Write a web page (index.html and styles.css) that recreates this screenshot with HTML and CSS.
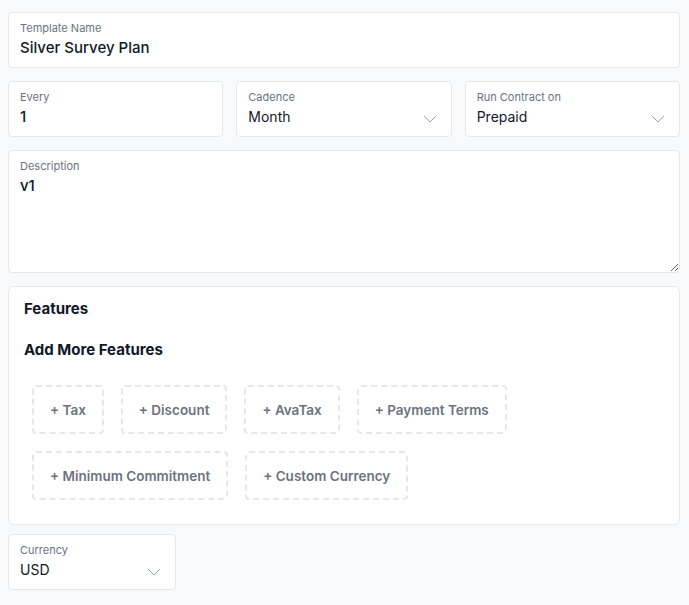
FILE: index.html
```
<!DOCTYPE html>
<html lang="en">
<head>
    <meta charset="UTF-8">
    <meta name="viewport" content="width=device-width, initial-scale=1.0">
    <title>Plan Template</title>
    <link rel="stylesheet" href="styles.css">
</head>
<body>
    <div class="page">
        <div class="field">
            <span class="label">Template Name</span>
            <span class="value input">Silver Survey Plan</span>
        </div>

        <div class="row">
            <div class="field">
                <span class="label">Every</span>
                <span class="value input">1</span>
            </div>
            <div class="field select">
                <span class="label">Cadence</span>
                <span class="value">Month</span>
                <svg class="chevron" width="14" height="8" viewBox="0 0 14 8"><path d="M1 1 L7 7 L13 1" fill="none" stroke="#9ca3af" stroke-width="1"/></svg>
            </div>
            <div class="field select">
                <span class="label">Run Contract on</span>
                <span class="value">Prepaid</span>
                <svg class="chevron" width="14" height="8" viewBox="0 0 14 8"><path d="M1 1 L7 7 L13 1" fill="none" stroke="#9ca3af" stroke-width="1"/></svg>
            </div>
        </div>

        <div class="field description">
            <span class="label">Description</span>
            <span class="value input">v1</span>
        </div>

        <!-- Features -->
        <div class="card">
            <h3>Features</h3>
            <h3 class="sub">Add More Features</h3>
            <div class="feature-list">
                <button class="add-btn">+ Tax</button>
                <button class="add-btn">+ Discount</button>
                <button class="add-btn">+ AvaTax</button>
                <button class="add-btn">+ Payment Terms</button>
                <button class="add-btn">+ Minimum Commitment</button>
                <button class="add-btn">+ Custom Currency</button>
            </div>
        </div>

        <div class="field select currency">
            <span class="label">Currency</span>
            <span class="value">USD</span>
            <svg class="chevron" width="14" height="8" viewBox="0 0 14 8"><path d="M1 1 L7 7 L13 1" fill="none" stroke="#9ca3af" stroke-width="1"/></svg>
        </div>
    </div>
</body>
</html>
```

FILE: styles.css
```
body {
    margin: 0;
    background-color: #f8f9fb;
    font-family: Inter, "Noto Sans", sans-serif;
    color: #111827;
}

.page {
    padding: 12px 9px 8px 8px;
    display: flex;
    flex-direction: column;
    gap: 13px;
}

.field {
    background-color: white;
    border: 1px solid #e5e7eb;
    border-radius: 4px;
    padding: 7px 11px 7px 11px;
    display: flex;
    flex-direction: column;
    position: relative;
}

.label {
    font-size: 11px;
    line-height: 16px;
    color: #6b7280;
}

.value {
    font-size: 14px;
    line-height: 24px;
    color: #111827;
}

.value.input {
    font-size: 15px;
    font-weight: 500;
}

.row {
    display: grid;
    grid-template-columns: 1fr 1fr 1fr;
    gap: 13px;
}

.chevron {
    position: absolute;
    right: 14px;
    top: 33px;
}

.description {
    height: 107px;
    resize: vertical;
    overflow: auto;
}

.card {
    background-color: white;
    border: 1px solid #e5e7eb;
    border-radius: 6px;
    padding: 12px 16px 24px 15px;
}

.card h3 {
    margin: 0;
    font-size: 15px;
    line-height: 20px;
    font-weight: 700;
}

.card h3.sub {
    margin-top: 21px;
}

.feature-list {
    display: flex;
    flex-wrap: wrap;
    gap: 17px;
    margin: 25px 0 0 8px;
    max-width: 500px;
}

.add-btn {
    background: white;
    border: 2px dashed #e5e7eb;
    border-radius: 4px;
    height: 49px;
    padding: 0 16px;
    font-family: Inter, "Noto Sans", sans-serif;
    font-size: 13.5px;
    font-weight: 600;
    color: #6b7280;
}

.currency {
    width: 144px;
    margin-top: -4px;
}
```
